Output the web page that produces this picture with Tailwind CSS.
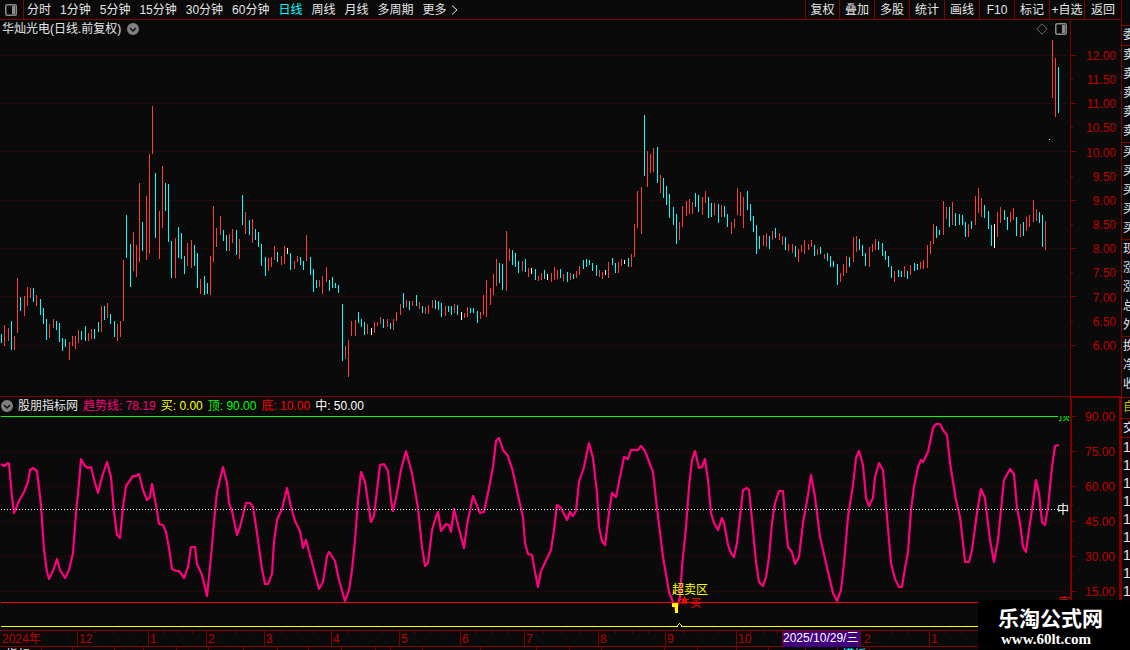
<!DOCTYPE html>
<html lang="zh-CN">
<head>
    <meta charset="UTF-8">
    <meta name="viewport" content="width=device-width, initial-scale=1.0">
    <title>华灿光电 日线</title>
    <script src="https://cdn.jsdelivr.net/npm/@tailwindcss/browser@4"></script>
</head>
<body class="bg-[#0a0a0a] text-[#e6e6e6] text-[12px] leading-[18px] font-['Liberation_Sans','Noto_Sans_CJK_SC',sans-serif]">
<div class="flex h-screen overflow-hidden relative">

    <main class="flex-1 min-w-0 grid grid-rows-[20px_377fr_233fr_16px_4px]">

        <!-- toolbar -->
        <nav class="flex items-stretch border-b border-[#800000] whitespace-nowrap overflow-hidden">
            <button class="w-6 shrink-0 border-r border-[#800000] pl-[5px]" aria-label="面板">
                <svg class="block w-3 h-3" viewBox="0 0 12 12" fill="none">
                    <rect x="0.75" y="0.75" width="10.5" height="10.5" rx="1.5" stroke="#8c8c8c" stroke-width="1.5"/>
                    <rect x="7" y="2" width="3" height="8" fill="#8c8c8c"/>
                </svg>
            </button>
            <div class="flex flex-1 gap-[9px] pl-[3px]">
                <button>分时</button>
                <button>1分钟</button>
                <button>5分钟</button>
                <button>15分钟</button>
                <button>30分钟</button>
                <button>60分钟</button>
                <button class="text-[#00ffff]">日线</button>
                <button>周线</button>
                <button>月线</button>
                <button>多周期</button>
                <button class="flex items-center gap-1">更多
                    <svg class="w-2 h-3" viewBox="0 0 8 12" fill="none" stroke="#e6e6e6"><path d="M1 1.5 6 6 1 10.5"/></svg>
                </button>
            </div>
            <div class="flex">
                <button class="w-[34px] border-l border-[#800000]">复权</button>
                <button class="w-[35px] border-l border-[#800000]">叠加</button>
                <button class="w-[35px] border-l border-[#800000]">多股</button>
                <button class="w-[35px] border-l border-[#800000]">统计</button>
                <button class="w-[35px] border-l border-[#800000]">画线</button>
                <button class="w-[35px] border-l border-[#800000]">F10</button>
                <button class="w-[35px] border-l border-[#800000]">标记</button>
                <button class="w-[35px] border-l border-[#800000]">+自选</button>
                <button class="w-[37px] border-l border-[#800000]">返回</button>
            </div>
        </nav>

        <!-- price -->
        <section class="flex min-h-0 border-b border-[#800000]">
            <div class="flex-1 min-w-0 flex flex-col">
                <header class="h-[18px] shrink-0 flex items-center pl-[2px] pr-[3px]">
                    <h1>华灿光电(日线.前复权)</h1>
                    <button class="ml-[6px]" aria-label="展开">
                        <svg class="block w-3 h-3" viewBox="0 0 12 12"><circle cx="6" cy="6" r="6" fill="#808080"/><path d="M3 5l3 3 3-3" fill="none" stroke="#111" stroke-width="1.5"/></svg>
                    </button>
                    <svg class="ml-auto w-3 h-3" viewBox="0 0 12 12" fill="none" stroke="#707070"><path d="M6 .8 11.2 6 6 11.2 .8 6Z"/></svg>
                    <button class="ml-[7px]" aria-label="侧栏">
                        <svg class="block w-3 h-3" viewBox="0 0 12 12" fill="none">
                            <rect x="0.75" y="0.75" width="10.5" height="10.5" rx="1.5" stroke="#8c8c8c" stroke-width="1.5"/>
                            <rect x="7" y="2" width="3" height="8" fill="#8c8c8c"/>
                        </svg>
                    </button>
                </header>
                <svg class="flex-1 min-h-0 w-full" viewBox="0 38 1070 358" preserveAspectRatio="none" shape-rendering="crispEdges" fill="none">
                    <path stroke="#6e0000" stroke-dasharray="1 3" d="M1 55.5H1068M1 103.5H1068M1 151.5H1068M1 200.5H1068M1 248.5H1068M1 296.5H1068M1 345.5H1068"/>
                    <path id="bars-r" stroke="#ff3c3c"/>
                    <path id="bars-c" stroke="#00ffff"/>
                    <path id="bars-w" stroke="#ffffff"/>
                </svg>
            </div>
            <div class="w-[51px] shrink-0 flex border-l border-[#800000]">
                <svg class="w-[5px] h-full" viewBox="0 20 5 376" preserveAspectRatio="none" shape-rendering="crispEdges">
                    <path stroke="#800000" d="M0 55.5H5M0 103.5H5M0 151.5H5M0 200.5H5M0 248.5H5M0 296.5H5M0 345.5H5M0 79.5H2M0 127.5H2M0 176.5H2M0 224.5H2M0 272.5H2M0 321.5H2"/>
                </svg>
                <ul class="flex-1 flex flex-col justify-between text-right text-[#c00000] leading-[16px] pt-[28px] pb-[42px] pr-[5px]">
                    <li>12.00</li><li>11.50</li><li>11.00</li><li>10.50</li><li>10.00</li><li>9.50</li><li>9.00</li>
                    <li>8.50</li><li>8.00</li><li>7.50</li><li>7.00</li><li>6.50</li><li>6.00</li>
                </ul>
            </div>
        </section>

        <!-- indicator -->
        <section class="flex min-h-0">
            <div class="flex-1 min-w-0 flex flex-col">
                <header class="h-[18px] shrink-0 flex items-center gap-[5px] pl-px whitespace-nowrap leading-[16px] pb-px">
                    <button aria-label="展开指标">
                        <svg class="block w-3 h-3" viewBox="0 0 12 12"><circle cx="6" cy="6" r="6" fill="#808080"/><path d="M3 5l3 3 3-3" fill="none" stroke="#111" stroke-width="1.5"/></svg>
                    </button>
                    <span>股朋指标网</span>
                    <span class="text-[#ff0080]">趋势线: 78.19</span>
                    <span class="text-[#ffff00]">买: 0.00</span>
                    <span class="text-[#00ff00]">顶: 90.00</span>
                    <span class="text-[#ff0000]">底: 10.00</span>
                    <span class="text-white">中: 50.00</span>
                </header>
                <div class="flex-1 min-h-0 relative">
                    <svg class="block w-full h-full" viewBox="0 415 1070 215" preserveAspectRatio="none" shape-rendering="crispEdges" fill="none">
                        <path stroke="#6e0000" stroke-dasharray="1 3" d="M1 451.5H1068M1 486.5H1068M1 521.5H1068M1 556.5H1068M1 591.5H1068"/>
                        <path stroke="#00ff00" d="M1 416.5H1058"/>
                        <polyline stroke="#ff0080" stroke-width="2.2" stroke-linejoin="round" shape-rendering="geometricPrecision" points="1,464 4,466 8,463 9,464 12,497 14,513 19,501 24,492 28,482 30,470 33,468 37,471 41,505 44,550 47,572 49,579 53,571 57,559 60,570 65,578 69,570 73,553 76,513 79,483 81,459 85,466 88,468 91,467 95,483 98,493 102,477 107,462 111,477 114,511 117,535 120,538 123,507 126,486 133,476 136,476 139,474 143,490 147,500 150,497 152,484 156,505 159,524 163,525 166,532 169,548 172,569 176,571 179,571 184,578 188,567 191,547 195,547 197,564 202,575 207,596 211,557 214,522 217,492 223,467 227,483 229,503 232,511 237,535 240,527 246,503 250,503 253,507 257,533 262,569 265,584 268,584 272,574 274,542 277,520 282,509 287,488 291,507 295,521 300,531 303,548 306,540 310,555 319,589 323,582 327,556 329,552 335,561 339,580 345,601 349,590 352,570 355,540 358,500 361,472 365,482 368,502 371,522
                            374,516 377,490 380,465 384,464 388,471 391,500 393,511 396,498 401,470 406,451 412,473 418,508 422,547 425,566 428,563 432,530 436,517 438,512 441,531 446,524 449,525 451,532 454,509 458,525 464,548 467,525 470,510 473,496 480,513 484,512 489,488 493,467 496,441 499,438 503,450 508,456 513,472 519,500 523,517 525,543 528,554 532,555 535,572 538,587 541,571 551,550 554,530 557,505 561,508 567,520 570,512 573,516 576,511 579,482 584,467 589,443 593,458 597,493 599,527 602,541 605,545 609,513 612,493 616,497 621,472 624,457 628,459 631,450 638,450 641,446 645,451 653,472 657,508 663,557 669,592 673,602 676,611 680,597 682,567 686,527 689,487 692,460 695,451 699,468 702,467 705,459 708,480 711,513 714,523 718,530 722,518 724,523 728,545 731,553 734,557 737,543 740,517
                            743,490 747,488 749,490 752,520 756,562 759,582 763,586 766,577 769,557 772,523 775,503 779,491 783,491 785,517 788,547 792,552 795,564 799,557 803,523 808,495 811,475 815,497 820,537 826,563 833,593 837,601 841,590 844,563 848,517 853,485 856,458 859,451 863,465 866,498 869,506 873,498 875,477 879,463 883,470 887,517 891,563 895,579 899,587 902,587 905,568 908,552 911,510 914,487 918,467 921,460 923,462 928,452 933,428 936,424 940,424 943,430 947,435 950,463 956,500 960,517 963,543 965,562 969,562 972,550 977,513 981,489 985,498 990,540 994,562 998,540 1002,500 1004,480 1010,469 1014,474 1017,508 1020,523 1023,547 1026,552 1029,530 1033,503 1036,480 1039,493 1042,522 1045,525 1048,507 1052,467 1055,446 1059,445"/>
                        <path stroke="#ffffff" stroke-dasharray="1 2" d="M1 509.5H1058"/>
                        <path stroke="#ff0000" d="M1 602.5H1058"/>
                        <path fill="#ffff00" d="M672 603H678V613H675V607H672Z"/>
                        <path stroke="#ffff00" d="M1 626.5H677L679.500 623.500 682 626.500H1058"/>
                        <path fill="#ff0000" d="M684.500 596 685.800 599.200H689L686.500 601.300 687.500 605 684.500 602.800 681.500 605 682.500 601.300 680 599.200H683.200Z"/>
                    </svg>
                    <span class="absolute left-[62.8%] top-[78%] leading-[14px] text-[#ffff00]">超卖区</span>
                    <span class="absolute left-[64.5%] top-[84%] leading-[14px] text-[11px] text-[#ff0000]">买</span>
                    <span class="absolute right-0 top-px h-[6px] overflow-hidden flex items-end leading-[12px] text-[#00ff00]">顶</span>
                    <span class="absolute right-px top-[41%] leading-[14px] text-white">中</span>
                    <span class="absolute right-0 top-[84%] leading-[14px] text-[#ff0000]">底</span>
                </div>
            </div>
            <div class="w-[51px] shrink-0 -mt-px flex border-2 border-b-0 border-[#800000]">
                <svg class="w-[4px] h-full" viewBox="0 398 4 232" preserveAspectRatio="none" shape-rendering="crispEdges">
                    <path stroke="#800000" d="M0 416.5H4M0 451.5H4M0 486.5H4M0 521.5H4M0 556.5H4M0 591.5H4M0 434.5H1M0 469.5H1M0 504.5H1M0 539.5H1M0 574.5H1"/>
                </svg>
                <ul class="flex-1 flex flex-col justify-between text-right text-[#c00000] leading-[16px] pt-[11px] pb-[30px] pr-[4px]">
                    <li>90.00</li><li>75.00</li><li>60.00</li><li>45.00</li><li>30.00</li><li>15.00</li>
                </ul>
            </div>
        </section>

        <!-- dates -->
        <section class="relative border-t border-[#800000] text-[#c00000] leading-[16px]">
            <ol class="grid h-full grid-cols-[77fr_71fr_58fr_58fr_67fr_68fr_61fr_64fr_74fr_67fr_71fr_46fr_79fr_68fr_192fr] whitespace-nowrap">
                <li class="pl-[2px]">2024年</li>
                <li class="border-l border-[#800000] pl-px">12</li>
                <li class="border-l border-[#800000] pl-px">1</li>
                <li class="border-l border-[#800000] pl-px">2</li>
                <li class="border-l border-[#800000] pl-px">3</li>
                <li class="border-l border-[#800000] pl-px">4</li>
                <li class="border-l border-[#800000] pl-px">5</li>
                <li class="border-l border-[#800000] pl-px">6</li>
                <li class="border-l border-[#800000] pl-px">7</li>
                <li class="border-l border-[#800000] pl-px">8</li>
                <li class="border-l border-[#800000] pl-px">9</li>
                <li class="border-l border-[#800000] pl-px">10</li>
                <li class="border-x border-[#800000] bg-[#400080] text-white leading-[14px] overflow-hidden">2025/10/29/三</li>
                <li class="pl-[3px]">2</li>
                <li class="border-l border-[#800000] pl-px">1</li>
            </ol>
            <svg class="absolute inset-x-0 top-0 w-full h-[2px]" viewBox="0 0 1121 2" preserveAspectRatio="none" shape-rendering="crispEdges">
                <path stroke="#800000" d="M95.500 0v2M113.500 0v2M130.500 0v2M163.500 0v2M177.500 0v2M192.500 0v2M221.500 0v2M236.500 0v2M250.500 0v2M281.500 0v2M297.500 0v2M313.500 0v2M348.500 0v2M365.500 0v2M382.500 0v2M414.500 0v2M430.500 0v2M445.500 0v2M476.500 0v2M492.500 0v2M508.500 0v2M543.500 0v2M561.500 0v2M580.500 0v2M615.500 0v2M632.500 0v2M648.500 0v2M683.500 0v2M701.500 0v2M718.500 0v2M750.500 0v2M764.500 0v2M777.500 0v2M874.500 0v2M891.500 0v2M908.500 0v2M945.500 0v2M961.500 0v2"/>
            </svg>
        </section>

        <!-- tabs, cut off by the window's edge -->
        <footer class="border-t border-[#800000] grid grid-cols-[42fr_31fr_42fr_29fr_33fr_31fr_35fr_34fr_31fr_33fr_34fr_15fr_32fr_58fr_56fr_32fr_32fr_63fr_33fr_39fr_32fr_37fr_32fr_32fr_250fr] overflow-hidden divide-x divide-[#800000] leading-[14px] whitespace-nowrap">
            <a href="#" class="pl-[6px] pt-px">指标</a><a href="#"></a><a href="#"></a><a href="#"></a><a href="#"></a><a href="#"></a><a href="#"></a><a href="#"></a><a href="#"></a><a href="#"></a><a href="#"></a><a href="#"></a><a href="#"></a><a href="#"></a><a href="#"></a><a href="#"></a><a href="#"></a><a href="#"></a><a href="#"></a><a href="#"></a><a href="#"></a><a href="#"></a><a href="#"></a><a href="#" class="pl-[4px] pt-px text-[#00ffff]">模板</a><a href="#"></a>
        </footer>
    </main>

    <!-- quote panel, only its first pixels are open -->
    <aside class="w-[9px] shrink-0 border-l border-[#800000] overflow-hidden whitespace-nowrap leading-[19px] *:border-t *:border-[#800000] *:pl-px pt-[25px]">
        <ul class="h-[20px]"><li>委</li></ul>
        <ul class="h-[97px]"><li>卖</li><li>卖</li><li>卖</li><li>卖</li><li>卖</li></ul>
        <ul class="h-[97px]"><li>买</li><li>买</li><li>买</li><li>买</li><li>买</li></ul>
        <ul class="h-[97px]"><li>现</li><li>涨</li><li>涨</li><li>总</li><li>外</li></ul>
        <ul class="h-[61px]"><li>换</li><li>净</li><li>收</li></ul>
        <ul class="h-[21px] text-[#c0c000]"><li>自</li></ul>
        <ul class="h-[19px]"><li>交</li></ul>
        <ul class="leading-[18px] text-[14px]"><li>1</li><li>1</li><li>1</li><li>1</li><li>1</li><li>1</li><li>1</li><li>1</li><li>1</li></ul>
    </aside>

    <div class="absolute right-0 bottom-0 w-[152px] h-[50px] bg-black text-white pl-5 pt-[7px]">
        <p class="text-[21px] leading-[24px] font-bold">乐淘公式网</p>
        <a href="#" class="block pl-[3px] text-[15px] leading-[16px] font-bold font-['Liberation_Serif',serif]">www.60lt.com</a>
    </div>
</div>

<script>
    // x, high, low for every day
    const bars = {
        r: `4,325,346 8,328,341 14,336,350 17,278,333 24,296,316 27,287,306 30,288,298 36,295,306 49,324,338 53,319,328 69,342,360 72,336,346 75,336,349 78,330,343
            88,333,341 91,329,339 101,306,332 107,303,318 117,324,341 120,321,337 123,260,321 133,232,271 136,245,277 139,183,262 146,196,260 149,154,254 152,106,154
            159,211,259 162,166,228 175,238,278 187,243,266 191,240,268 200,279,294 210,256,295 213,206,262 216,228,247 220,216,235 229,234,251 232,229,243 239,239,259
            245,212,234 252,219,243 268,258,271 271,257,267 274,246,260 281,256,265 284,246,264 294,261,269 297,256,262 306,235,261 319,280,287 322,276,294 326,267,282
            345,346,359 348,340,377 351,321,336 355,320,336 367,324,334 374,322,333 377,322,326 380,317,324 387,319,327 393,319,330 396,312,321 400,304,315 406,300,307
            412,301,306 419,302,309 425,307,314 428,305,314 432,300,308 445,306,316 454,304,313 464,313,318 467,307,317 480,312,319 483,295,315 486,280,317 490,288,305
            493,274,295 496,259,286 506,231,291 509,249,261 522,261,271 528,268,277 538,276,281 541,273,280 551,273,282 554,267,280 557,270,279 563,274,281 570,273,280
            576,271,278 579,266,275 599,270,277 602,272,279 608,262,278 618,262,273 621,259,266 631,254,267 634,224,257 637,191,228 641,187,234 647,151,187 650,154,173
            653,148,172 660,175,193 679,222,240 682,206,227 686,201,216 689,199,214 692,202,214 702,197,215 705,191,203 714,203,215 721,205,217 731,222,234 734,219,228
            737,188,215 740,192,216 743,197,228 763,235,246 766,233,247 772,231,240 779,233,240 782,236,245 788,244,251 792,244,253 798,249,262 801,245,252 804,240,254
            808,244,250 811,240,247 817,249,255 824,254,259 840,273,282 843,264,276 846,256,273 853,237,262 856,236,252 869,247,267 872,244,252 875,239,250 894,271,282
            904,266,277 910,265,275 920,262,269 923,260,269 927,245,268 930,241,254 933,224,244 943,201,235 946,207,219 952,202,225 968,224,237 975,196,225 978,188,213
            981,198,217 997,212,237 1000,207,223 1010,212,222 1013,208,220 1020,224,237 1026,217,231 1029,215,227 1033,200,222 1036,209,221 1045,221,250 1052,40,98 1055,58,117`,
        c: `1,334,343 11,321,350 20,297,311 33,288,302 40,299,315 43,308,324 46,319,340 56,321,330 59,323,342 62,338,351 65,339,347 81,331,340 85,326,341 94,329,339
            98,322,332 104,306,320 110,314,324 114,321,337 126,215,258 130,244,287 142,222,251 155,173,238 165,183,211 168,184,242 171,241,278 178,227,258 181,233,259
            184,256,274 194,245,266 197,253,288 204,276,295 207,283,294 223,230,241 226,235,251 236,230,255 242,195,225 249,220,235 255,229,240 258,232,247 261,244,266
            265,257,276 277,252,262 290,253,270 300,257,265 303,261,270 310,257,275 313,269,292 316,280,288 329,280,291 332,277,288 335,283,288 338,285,293 342,304,361
            358,312,323 361,319,327 364,322,335 383,319,328 390,323,329 403,293,308 409,301,310 416,295,306 422,306,313 435,300,309 438,301,310 441,303,317 448,306,312
            451,306,315 457,305,315 470,308,313 473,308,313 477,311,323 499,263,283 502,264,290 512,250,265 515,253,267 518,261,273 525,259,272 535,269,280 544,270,279
            560,269,278 567,272,282 573,274,279 583,260,269 586,259,267 589,260,265 592,263,271 596,265,276 612,258,265 615,263,273 628,258,267 644,115,176 657,147,183
            663,178,198 666,186,205 669,194,218 673,207,225 676,214,244 695,193,207 698,195,212 708,197,218 711,203,217 718,204,223 724,206,217 727,214,227 747,191,210
            750,204,221 753,216,232 756,225,254 759,236,249 769,236,249 775,228,238 785,237,250 795,246,257 814,245,256 820,247,254 827,253,261 830,256,267 833,261,267
            837,264,285 849,257,267 859,239,250 862,245,256 865,253,266 878,241,250 882,243,256 885,251,260 888,256,267 891,266,278 898,270,277 901,271,277 907,271,279
            914,263,271 917,264,270 936,226,238 939,230,235 949,207,227 955,213,226 959,214,225 962,215,225 965,222,237 971,221,229 984,205,218 988,211,229 991,225,246
            1004,210,220 1007,217,230 1016,217,236 1023,222,236 1039,212,223 1042,215,247 1058,67,113`,
        w: `287,248,254 371,328,335 461,312,320 531,268,274 547,274,280 605,270,275 624,260,264 994,224,248 1049,139,140`
    };

    for (const key in bars) {
        const d = bars[key].split(/\s+/).map((bar) => {
            const [x, high, low] = bar.split(",").map(Number);
            return `M${x + 0.5} ${high}V${low}`;
        });
        document.getElementById("bars-" + key).setAttribute("d", d.join(""));
    }
</script>
</body>
</html>
